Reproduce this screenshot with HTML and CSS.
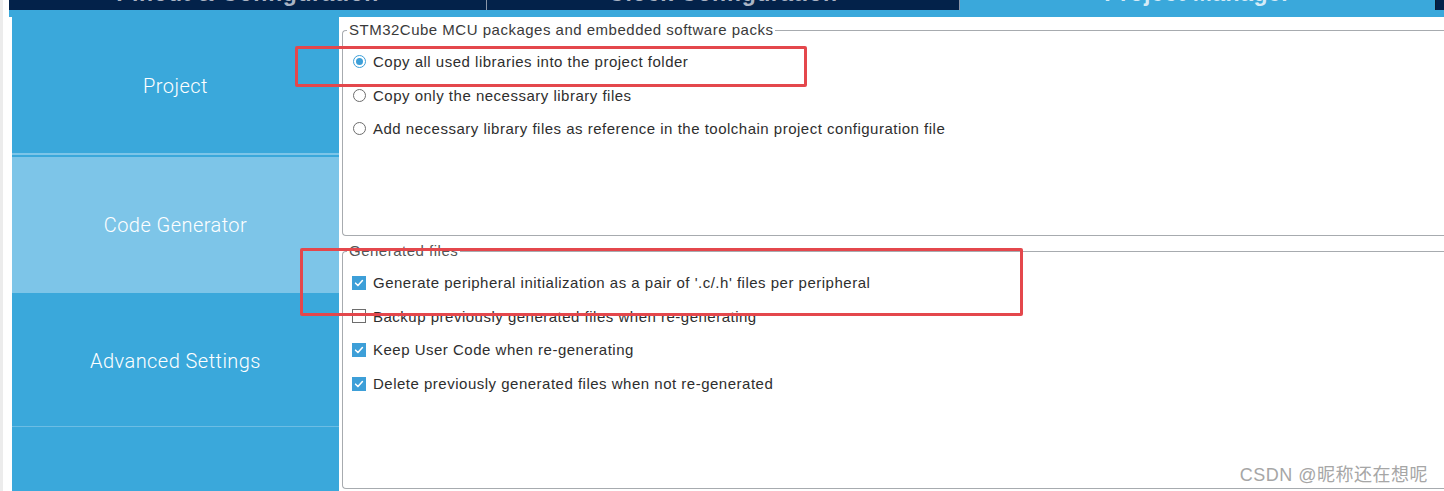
FILE: index.html
```html
<!DOCTYPE html>
<html>
<head>
<meta charset="utf-8">
<link rel="stylesheet" href="styles.css">
</head>
<body>
<div class="page">
  <div class="edge"></div>
  <div class="rest">
    <div class="tabbar">
      <div class="tab t1"><span>Pinout &amp; Configuration</span></div>
      <div class="tab t2"><span>Clock Configuration</span></div>
      <div class="tab t3 active"><span>Project Manager</span></div>
      <div class="tab t4"></div>
    </div>
    <div class="band"></div>
    <div class="main">
      <nav class="sidebar">
        <div class="nav nav-project">Project</div>
        <div class="nav nav-code">Code Generator</div>
        <div class="nav nav-adv">Advanced Settings</div>
        <div class="nav nav-empty"></div>
      </nav>
      <section class="content">
        <fieldset class="group g1">
          <legend>STM32Cube MCU packages and embedded software packs</legend>
          <label class="row"><span class="radio on"></span>Copy all used libraries into the project folder</label>
          <label class="row"><span class="radio"></span>Copy only the necessary library files</label>
          <label class="row"><span class="radio"></span>Add necessary library files as reference in the toolchain project configuration file</label>
        </fieldset>
        <fieldset class="group g2">
          <legend>Generated files</legend>
          <label class="row"><span class="check on"><svg viewBox="0 0 14 14"><path d="M3 7.2 L5.8 10 L11 4.2" /></svg></span>Generate peripheral initialization as a pair of '.c/.h' files per peripheral</label>
          <label class="row"><span class="check"></span>Backup previously generated files when re-generating</label>
          <label class="row"><span class="check on"><svg viewBox="0 0 14 14"><path d="M3 7.2 L5.8 10 L11 4.2" /></svg></span>Keep User Code when re-generating</label>
          <label class="row"><span class="check on"><svg viewBox="0 0 14 14"><path d="M3 7.2 L5.8 10 L11 4.2" /></svg></span>Delete previously generated files when not re-generated</label>
        </fieldset>
      </section>
    </div>
  </div>
  <div class="mark mark1"></div>
  <div class="mark mark2"></div>
  <div class="watermark">CSDN @昵称还在想呢</div>
</div>
</body>
</html>
```
FILE: styles.css
```css
* { box-sizing: border-box; }
html, body { margin: 0; padding: 0; background: #fff; }
body { width: 1444px; height: 491px; overflow: hidden; font-family: "Liberation Sans", Arial, sans-serif; }

.page { position: relative; display: flex; height: 491px; }
.edge { width: 9px; flex: none; border-left: 3px solid #ececec; background: #fff; }
.rest { flex: 1; display: flex; flex-direction: column; min-width: 0; }

.tabbar { height: 10px; display: flex; background: #03224a; overflow: hidden; flex: none; }
.tab { height: 10px; overflow: hidden; display: flex; justify-content: center; }
.tab span { display: block; font-size: 23px; line-height: 26px; margin-top: -20px; color: #aab4c4; font-weight: bold; white-space: nowrap; letter-spacing: 0.5px; }
.t1 { width: 478px; border-right: 1px solid #8a96a8; }
.t2 { width: 473px; border-right: 1px solid #8a96a8; }
.t3 { width: 475px; }
.t3 span { color: #d4ebf7; }
.t4 { flex: 1; border-left: 1px solid #0e1a2a; }
.active { background: #3aa8db; }

.band { height: 7px; background: #3aa8db; flex: none; }

.main { flex: 1; display: flex; min-height: 0; }
.sidebar { width: 330px; flex: none; display: flex; flex-direction: column; padding-left: 3px; }
.nav { color: #fff; display: flex; align-items: center; justify-content: center; font-family: Roboto, "Liberation Sans", sans-serif; font-weight: 300; font-size: 20px; letter-spacing: 0.45px; }
.nav-project { height: 138px; background: #3aa8db; border-bottom: 2px solid #7dc5e8; padding-top: 2px; }
.nav-code { height: 138px; background: #7dc5e8; border-top: 2px solid #3aa8db; }
.nav-adv { height: 134px; background: #3aa8db; border-bottom: 1px solid #6cbde4; padding-top: 3px; }
.nav-empty { flex: 1; background: #3aa8db; }

.content { flex: 1; padding: 4px 0 0 3px; display: flex; flex-direction: column; gap: 6px; min-width: 0; }
.group { margin: 0; border: 1px solid #a7abaf; border-right: none; border-radius: 4px 0 0 4px; padding: 6px 0 0 4px; }
.group legend { padding: 0 2px; font-size: 15px; line-height: 18px; color: #3a3a3a; letter-spacing: 0.5px; }
.g1 { height: 215px; }
.g2 { height: 247px; }
.g2 legend { color: #555; }

.row { display: flex; align-items: center; height: 33.6px; font-size: 15px; color: #2e2e2e; padding-left: 5px; white-space: nowrap; letter-spacing: 0.5px; }

.radio { width: 13px; height: 13px; border: 1px solid #6d6d6d; border-radius: 50%; margin-right: 7px; margin-left: 1px; flex: none; display: flex; align-items: center; justify-content: center; background: #fff; }
.radio.on { border-color: #3d9fd8; }
.radio.on::after { content: ""; width: 7px; height: 7px; border-radius: 50%; background: #3d9fd8; }

.check { width: 14px; height: 14px; border: 1px solid #6d6d6d; margin-right: 7px; flex: none; background: #fff; display: flex; }
.check.on { background: #3d9fd8; border-color: #3d9fd8; }
.check svg { width: 12px; height: 12px; }
.check svg path { fill: none; stroke: #fff; stroke-width: 1.8; stroke-linecap: round; stroke-linejoin: round; }

.mark { position: absolute; border: 3px solid #e4474c; border-radius: 2px; pointer-events: none; }
.mark1 { left: 295px; top: 46px; width: 512px; height: 41px; }
.mark2 { left: 300px; top: 248px; width: 723px; height: 68px; }

.watermark { position: absolute; right: 16px; top: 460px; font-size: 18px; letter-spacing: 0.5px; color: #a6a6a6; font-family: "Liberation Sans", "Noto Sans CJK SC", sans-serif; text-shadow: 0 0 1px #fff; }
```
